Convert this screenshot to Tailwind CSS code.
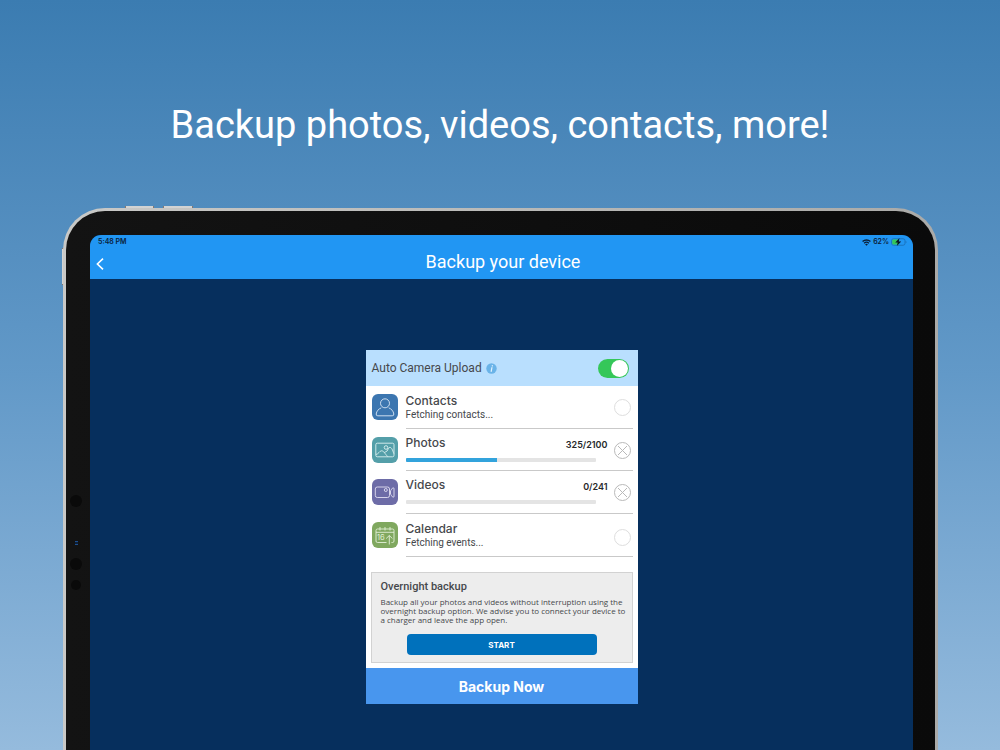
<!DOCTYPE html>
<html lang="en">
<head>
<meta charset="utf-8">
<meta name="viewport" content="width=device-width, initial-scale=1">
<title>Backup your device</title>
<script src="https://cdn.jsdelivr.net/npm/@tailwindcss/browser@4"></script>
</head>
<body class="flex h-screen flex-col overflow-hidden bg-linear-to-b from-[#3b7cb1] via-[#6299c8] to-[#95bbdd] font-['Inter',sans-serif] text-[#46484c]">
<h1 class="shrink-0 pt-[101px] pb-[59px] text-center font-['Roboto',sans-serif] text-[38px] leading-12 text-white">Backup photos, videos, contacts, more!</h1>

<div class="relative mr-[62px] ml-[63px] flex grow flex-col">
  <!-- volume and power keys -->
  <div class="absolute -top-[2px] left-[62px] h-2 w-[29px] border-x border-[#85776f] bg-[#d2d3d3]"></div>
  <div class="absolute -top-[2px] left-[100px] h-2 w-[30px] border-x border-[#85776f] bg-[#d2d3d3]"></div>
  <div class="absolute top-[40px] -left-px h-[37px] w-2 border-y border-[#85776f] bg-[#d2d3d3]"></div>

  <div class="relative flex grow flex-col rounded-t-[42px] bg-linear-to-r from-[#c9c9c7] to-[#aaaaa8] px-[3px] pt-[3px]">
    <div class="flex grow flex-col rounded-t-[39px] bg-linear-to-r from-[#131313] to-[#0a0a0a] pt-6 pr-[22px] pl-6">
      <!-- camera sensors -->
      <div class="absolute top-[287px] left-[7px] size-3 rounded-full bg-[#0a0a0a]"></div>
      <div class="absolute top-[333px] left-[12px] h-1 w-[3px] border-y border-[#1e4f8f] bg-[#0d2038]"></div>
      <div class="absolute top-[350px] left-[7px] size-3 rounded-full bg-[#0a0a0a]"></div>
      <div class="absolute top-[372px] left-[8px] size-[10px] rounded-full bg-[#0a0a0a]"></div>

      <main class="flex grow flex-col overflow-hidden rounded-t-[11px] bg-[#062f5d]">
        <header class="h-11 shrink-0 bg-[#2196f3]">
          <div class="flex h-[14px] items-center justify-between pr-[6px] pl-2 text-[7px] leading-3 font-semibold text-[#0a2038]">
            <span>5:48 PM</span>
            <span class="flex items-center gap-[2px]">
              <svg class="h-[7px] w-[9px]" viewBox="0 0 16 12" fill="none" stroke="#0a2038" stroke-width="2.4"><path d="M1 4.400a10 10 0 0 1 14 0M3.800 7.400a6 6 0 0 1 8.400 0"/><path d="M8 11.800 5.600 9.500a3.600 3.600 0 0 1 4.800 0z" fill="#0a2038" stroke="none"/></svg>
              <span>62%</span>
              <svg class="h-[8px] w-[16px]" viewBox="0 0 32 16"><rect x="1" y="1.500" width="27" height="13" rx="4" fill="none" stroke="#1b6db4" stroke-width="1.600"/><path d="M29.500 5.500q3 2.500 0 5z" fill="#1b6db4"/><rect x="2.500" y="3" width="14" height="10" rx="2" fill="#35c759"/><path d="M17 0 8.500 9h5L11.500 16 20.500 6.800h-5z" fill="#071526"/></svg>
            </span>
          </div>
          <div class="grid h-7 grid-cols-[18px_1fr_18px] items-center">
            <button aria-label="Back" class="flex justify-end pt-[2px] pr-[4px]"><svg class="h-3 w-2" viewBox="0 0 8 12" fill="none" stroke="#fff" stroke-width="1.600"><path d="M7 .6 1.400 6 7 11.400"/></svg></button>
            <h2 class="pb-[3px] pl-[3px] text-center font-['Roboto',sans-serif] text-[18px] leading-6 text-white">Backup your device</h2>
          </div>
        </header>

        <section class="mx-auto mt-[71px] w-[272px] shrink-0 bg-white">
          <div class="flex h-9 items-center bg-[#b9dffe] pr-[9px] pl-[6px]">
            <label for="auto" class="font-['Roboto',sans-serif] text-[12px] leading-4">Auto Camera Upload</label>
            <button aria-label="About auto camera upload" class="ml-1"><svg class="size-[11px]" viewBox="0 0 11 11"><circle cx="5.500" cy="5.500" r="5.200" fill="#6ab3e8"/><path d="M5.900 4.700 5.200 8.300M6.300 2.500V2.900" stroke="#e2f2fe" stroke-width="1.200" stroke-linecap="round"/></svg></button>
            <span class="relative ml-auto h-[19px] w-[31px]">
              <input id="auto" type="checkbox" role="switch" checked class="peer block h-[19px] w-[31px] appearance-none rounded-full bg-[#bfc4c9] checked:bg-[#35c759]">
              <span class="pointer-events-none absolute top-px left-px size-[17px] rounded-full bg-white peer-checked:left-[13px]"></span>
            </span>
          </div>

          <ul class="pr-[5px] pl-[6px]">
            <li class="flex h-[43px] gap-2">
              <svg class="mt-2 size-[26px] shrink-0" viewBox="0 0 26 26" fill="none" stroke="#dbe8f5" stroke-width=".9"><rect width="26" height="26" rx="6" fill="#3c76b0" stroke="none"/><circle cx="13" cy="9.300" r="4.500"/><path d="M9.300 13.800C6.500 15 4.600 17 4.200 20Q4 21.800 5.800 21.800h14.400q1.800 0 1.600-1.800C21.400 17 19.500 15 16.700 13.800"/></svg>
              <div class="flex grow items-center border-b border-[#c9c9c9]">
                <div class="grow pt-[2px]"><h3 class="text-[12px] leading-[14px] font-medium">Contacts</h3><p class="font-['Roboto',sans-serif] text-[10px] leading-[14px]">Fetching contacts...</p></div>
                <span class="mr-[2px] size-[17px] rounded-full border border-[#dedede]"></span>
              </div>
            </li>
            <li class="flex h-[42px] gap-2">
              <svg class="mt-2 size-[26px] shrink-0" viewBox="0 0 26 26" fill="none" stroke="#dbf0f1" stroke-width=".9" stroke-linejoin="round"><rect width="26" height="26" rx="6" fill="#549fa9" stroke="none"/><rect x="3.800" y="6.200" width="18.200" height="13.600" rx="1.500"/><circle cx="14" cy="10.500" r="1.800"/><path d="M4 17.500C6.500 17.200 7.500 13.800 9.500 13.800c2.500 0 3 2.800 6.500 6M12.300 15.500c1-.8 2-.6 2.800-1.500.8-1 1.200-3.600 2.700-3.600 2 0 2.700 2.600 4 6.200"/></svg>
              <div class="flex grow border-b border-[#c9c9c9]">
                <div class="w-[202px]">
                  <div class="mt-[6px] flex items-start justify-between"><h3 class="text-[12px] leading-4 font-medium">Photos</h3><span class="pt-[2px] text-[9px] leading-4 font-semibold text-[#26282a]">325/2100</span></div>
                  <div role="progressbar" aria-label="Photos" aria-valuenow="48" class="mt-[5px] h-1 w-[190px] overflow-hidden rounded-[1px] bg-[#e4e4e4]"><div class="h-1 bg-[#33a3dc]" style="width:48%"></div></div>
                </div>
                <button aria-label="Cancel photos" class="mt-[13px] mr-[2px] ml-auto size-[17px]"><svg viewBox="0 0 17 17" fill="none" stroke="#b9b9b9"><circle cx="8.500" cy="8.500" r="8"/><path d="m4 4 9 9m0-9-9 9"/></svg></button>
              </div>
            </li>
            <li class="flex h-[43px] gap-2">
              <svg class="mt-2 size-[26px] shrink-0" viewBox="0 0 26 26" fill="none" stroke="#e2e0f2" stroke-width=".9" stroke-linejoin="round"><rect width="26" height="26" rx="6" fill="#6d6ca7" stroke="none"/><rect x="3.300" y="8" width="14.200" height="10.500" rx="2"/><circle cx="13.800" cy="11" r="1.500"/><path d="M18.500 11.800C19.300 11.300 19.800 9 21.200 8.800Q22 8.700 22 9.800v7.400q0 1.100-.8 1C19.800 18 19.300 15.700 18.500 15.200z"/></svg>
              <div class="flex grow border-b border-[#c9c9c9]">
                <div class="w-[202px]">
                  <div class="mt-[6px] flex items-start justify-between"><h3 class="text-[12px] leading-4 font-medium">Videos</h3><span class="pt-[2px] text-[9px] leading-4 font-semibold text-[#26282a]">0/241</span></div>
                  <div role="progressbar" aria-label="Videos" aria-valuenow="0" class="mt-[5px] h-1 w-[190px] rounded-[1px] bg-[#e4e4e4]"></div>
                </div>
                <button aria-label="Cancel videos" class="mt-[13px] mr-[2px] ml-auto size-[17px]"><svg viewBox="0 0 17 17" fill="none" stroke="#b9b9b9"><circle cx="8.500" cy="8.500" r="8"/><path d="m4 4 9 9m0-9-9 9"/></svg></button>
              </div>
            </li>
            <li class="flex h-[43px] gap-2">
              <svg class="mt-2 size-[26px] shrink-0" viewBox="0 0 26 26" fill="none" stroke="#e3f0d8" stroke-width=".9"><rect width="26" height="26" rx="6" fill="#80a85f" stroke="none"/><path d="M14.500 20.500h-9q-1.500 0-1.500-1.500V8.500Q4 7 5.500 7h15Q22 7 22 8.500v10.500q0 1.500-1.500 1.500h-1M4 10.300h18M8 5v3.500M13 5v3.500M18 5v3.500M17.300 22.500V13.500M14.200 16.500l3.100-3 3.100 3"/><text x="5" y="18" font-size="7.500" fill="#e3f0d8" stroke="none">16</text></svg>
              <div class="flex grow items-center border-b border-[#c9c9c9]">
                <div class="grow pt-px"><h3 class="text-[12px] leading-[14px] font-medium">Calendar</h3><p class="font-['Roboto',sans-serif] text-[10px] leading-[14px]">Fetching events...</p></div>
                <span class="mt-[5px] mr-[2px] size-[17px] rounded-full border border-[#dedede]"></span>
              </div>
            </li>
          </ul>

          <div class="mx-[5px] mt-[15px] mb-[5px] h-[91px] border border-[#d2d2d2] bg-[#ededed] px-[9px] pt-[6px]">
            <h3 class="font-['Roboto',sans-serif] text-[11px] leading-4 font-medium">Overnight backup</h3>
            <p class="mt-[2px] font-['Open_Sans',sans-serif] text-[8px] leading-[9px] whitespace-nowrap">Backup all your photos and videos without interruption using the<br>overnight backup option. We advise you to connect your device to<br>a charger and leave the app open.</p>
            <button class="mx-auto mt-[10px] block h-[21px] w-[190px] rounded-[4px] bg-[#0071bc] text-[8px] font-bold text-white">START</button>
          </div>
          <button class="block h-9 w-full bg-[#4896ee] text-[14px] font-bold text-white">Backup Now</button>
        </section>
      </main>
    </div>
  </div>
</div>
</body>
</html>
